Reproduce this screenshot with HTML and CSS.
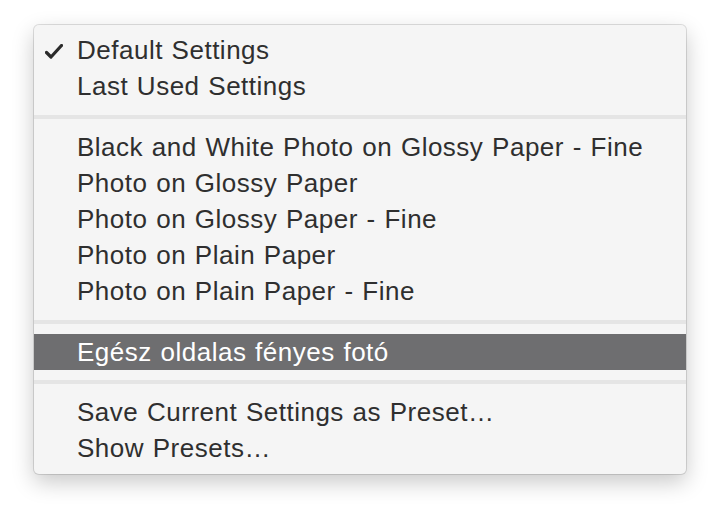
FILE: index.html
```html
<!DOCTYPE html>
<html lang="en">
<head>
	<meta charset="UTF-8">
	<title>Presets menu</title>
	<link rel="stylesheet" href="styles.css">
</head>
<body>
<div class="menu">
	<ul>
		<li class="checked">
			<svg class="check" width="18" height="15" viewBox="0 0 18 15"><path d="M1.5 8.5 L6 13 L16.5 1.5" fill="none" stroke="#2b2b2b" stroke-width="3.2" stroke-linecap="round" stroke-linejoin="round"/></svg>
			Default Settings
		</li>
		<li>Last Used Settings</li>
	</ul>
	<div class="sep"></div>
	<ul>
		<li>Black and White Photo on Glossy Paper - Fine</li>
		<li>Photo on Glossy Paper</li>
		<li>Photo on Glossy Paper - Fine</li>
		<li>Photo on Plain Paper</li>
		<li>Photo on Plain Paper - Fine</li>
	</ul>
	<div class="sep"></div>
	<ul>
		<li class="active">Egész oldalas fényes fotó</li>
	</ul>
	<div class="sep sep-last"></div>
	<ul>
		<li>Save Current Settings as Preset…</li>
		<li>Show Presets…</li>
	</ul>
</div>
</body>
</html>
```

FILE: styles.css
```css
html,body{margin:0;padding:0;height:100%;background:#fff;}
body{font:26px/36px "Liberation Sans",Arial,sans-serif;color:#2f2f2f;letter-spacing:0.5px;word-spacing:1px;}
ul{list-style-type:none;margin:0;padding:0;}
.menu{position:absolute;top:25px;left:34px;width:652px;box-sizing:border-box;background:#f5f5f5;border-radius:5px;padding:7px 0 8px;box-shadow:0 0 0 1px rgba(0,0,0,.12),0 8px 22px rgba(0,0,0,.22);}
.menu li{position:relative;height:36px;padding-left:43px;white-space:nowrap;}
.menu li.active{background:#6e6e70;color:#fff;}
.check{position:absolute;left:11px;top:12px;}
.sep{height:4px;background:#e5e5e5;margin:11px 0 10px;}
.sep-last{margin-top:10px;}
```
